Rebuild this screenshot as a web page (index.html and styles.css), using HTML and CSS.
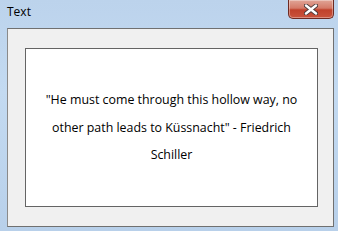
FILE: index.html
```html
<!DOCTYPE html>
<html lang="en">
<head>
    <meta charset="UTF-8">
    <title>Text</title>
    <link rel="stylesheet" href="styles.css">
</head>
<body>
    <div class="window">
        <div class="titlebar">
            <span class="title">Text</span>
            <button class="close-btn" aria-label="Close">
                <svg width="14" height="11" viewBox="0 0 14 11">
                    <path d="M2 1.5 L12 9.5 M12 1.5 L2 9.5" stroke="#4a3a3a" stroke-width="4.2" stroke-linecap="round"/>
                    <path d="M2 1.5 L12 9.5 M12 1.5 L2 9.5" stroke="#fff" stroke-width="2.4" stroke-linecap="round"/>
                </svg>
            </button>
        </div>
        <div class="client">
            <div class="quote-box">
                <p>"He must come through this hollow way, no other path leads to Küssnacht" - Friedrich Schiller</p>
            </div>
        </div>
    </div>
</body>
</html>
```

FILE: styles.css
```css
body {
    margin: 0;
    padding: 0;
    font-family: "Open Sans", "Noto Sans", sans-serif;
    background-color: #fff;
}

.window {
    width: 338px;
    height: 231px;
    box-sizing: border-box;
    background: linear-gradient(to bottom, #bcd3ec 0%, #c3daf1 40%, #b8d0ea 100%);
    display: flex;
    flex-direction: column;
    padding: 0 4px 4px 7px;
}

.titlebar {
    height: 28px;
    display: flex;
    justify-content: space-between;
    align-items: flex-start;
    flex-shrink: 0;
}

.title {
    font-size: 12px;
    color: #000;
    margin-top: 3px;
}

.close-btn {
    width: 46px;
    height: 19px;
    margin: 0;
    padding: 0;
    border: 1px solid #6e2a22;
    border-top: none;
    border-radius: 0 0 5px 5px;
    background: linear-gradient(to bottom, #e0a597 0%, #d47a68 45%, #c0412b 55%, #c9533c 100%);
    box-shadow: inset 0 0 0 1px rgba(255, 255, 255, 0.35);
    display: flex;
    align-items: center;
    justify-content: center;
}

.client {
    flex: 1;
    background-color: #f0f0f0;
    border: 1px solid #707070;
    border-left-color: #8a8a8a;
    padding: 19px 15px 19px 17px;
    display: flex;
}

.quote-box {
    flex: 1;
    background-color: #fff;
    border: 1px solid #646464;
    display: flex;
    align-items: center;
    justify-content: center;
    padding: 0 14px;
}

.quote-box p {
    margin: 0;
    font-size: 12.4px;
    line-height: 27.5px;
    text-align: center;
    color: #000;
}
```
